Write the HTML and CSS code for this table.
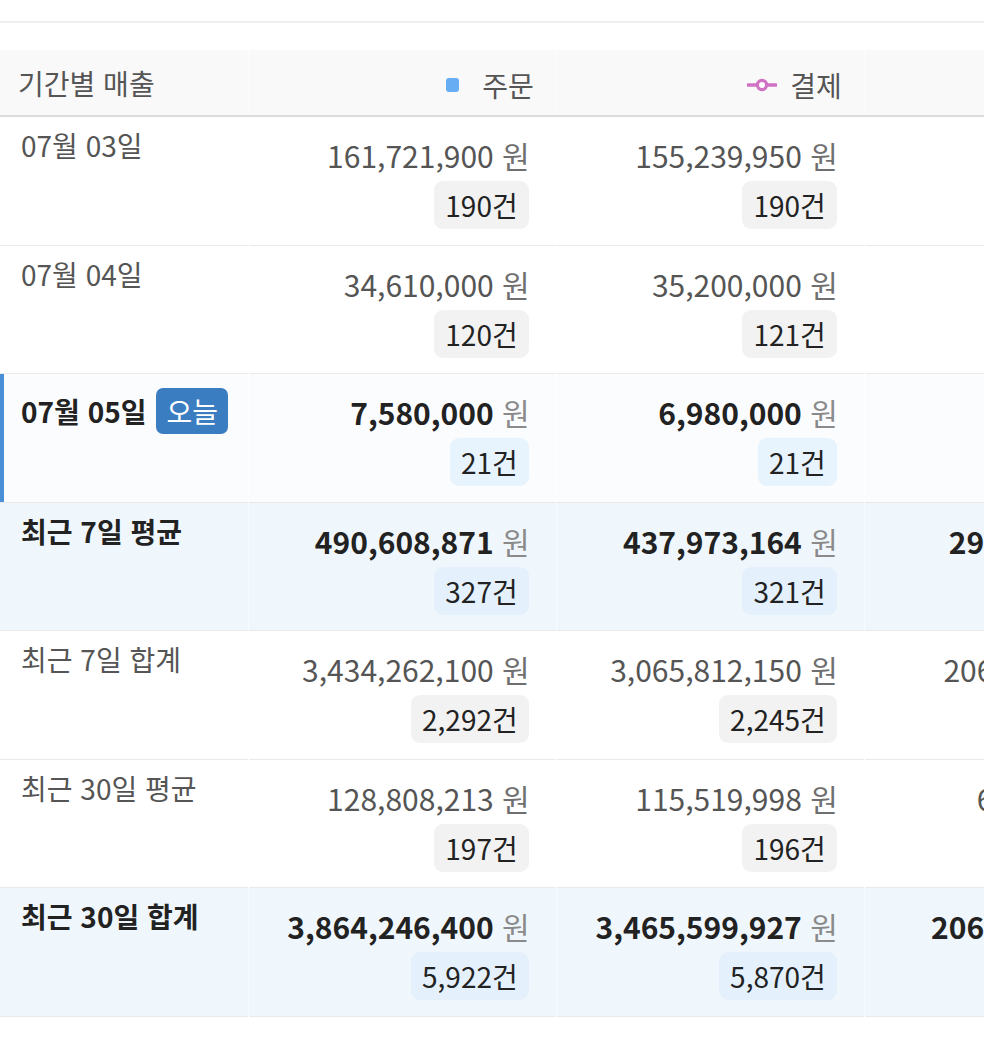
FILE: index.html
```html
<!DOCTYPE html>
<html lang="ko">
<head>
<meta charset="utf-8">
<title>기간별 매출</title>
<link rel="stylesheet" href="styles.css">
</head>
<body>
<div class="top-edge"></div>
<div class="table-wrap">
  <table class="sales">
    <colgroup>
      <col class="c-label"><col class="c-num"><col class="c-num"><col class="c-num">
    </colgroup>
    <thead>
      <tr>
        <th class="h-label">기간별 매출</th>
        <th class="h-num"><span class="legend"><span class="sq"></span>주문</span></th>
        <th class="h-num"><span class="legend legend-line"><svg class="ln" viewBox="0 0 30 14" width="30" height="14"><line x1="1" y1="7" x2="29" y2="7" stroke="#d173c4" stroke-width="3.4" stroke-linecap="round"/><circle cx="15" cy="7" r="4.6" fill="#fff" stroke="#d173c4" stroke-width="3.2"/></svg>결제</span></th>
        <th class="h-num"><span class="legend"><span class="sq sq-alt"></span>환불</span></th>
      </tr>
    </thead>
    <tbody>
      <tr class="row">
        <td class="label"><div class="label-line">07월 03일</div></td>
        <td class="num"><div class="cell"><div class="amount"><b>161,721,900</b> <span class="won">원</span></div><span class="count">190건</span></div></td>
        <td class="num"><div class="cell"><div class="amount"><b>155,239,950</b> <span class="won">원</span></div><span class="count">190건</span></div></td>
        <td class="num"><div class="cell"><div class="amount"><b>482,000</b> <span class="won">원</span></div><span class="count">2건</span></div></td>
      </tr>
      <tr class="row">
        <td class="label"><div class="label-line">07월 04일</div></td>
        <td class="num"><div class="cell"><div class="amount"><b>34,610,000</b> <span class="won">원</span></div><span class="count">120건</span></div></td>
        <td class="num"><div class="cell"><div class="amount"><b>35,200,000</b> <span class="won">원</span></div><span class="count">121건</span></div></td>
        <td class="num"><div class="cell"><div class="amount"><b>310,000</b> <span class="won">원</span></div><span class="count">1건</span></div></td>
      </tr>
      <tr class="row today">
        <td class="label"><div class="label-line">07월 05일 <span class="today-tag">오늘</span></div></td>
        <td class="num"><div class="cell"><div class="amount"><b>7,580,000</b> <span class="won">원</span></div><span class="count">21건</span></div></td>
        <td class="num"><div class="cell"><div class="amount"><b>6,980,000</b> <span class="won">원</span></div><span class="count">21건</span></div></td>
        <td class="num"><div class="cell"><div class="amount"><b>0</b> <span class="won">원</span></div><span class="count">0건</span></div></td>
      </tr>
      <tr class="row summary">
        <td class="label"><div class="label-line">최근 7일 평균</div></td>
        <td class="num"><div class="cell"><div class="amount"><b>490,608,871</b> <span class="won">원</span></div><span class="count">327건</span></div></td>
        <td class="num"><div class="cell"><div class="amount"><b>437,973,164</b> <span class="won">원</span></div><span class="count">321건</span></div></td>
        <td class="num"><div class="cell"><div class="amount"><b>29,441,371</b> <span class="won">원</span></div><span class="count">19건</span></div></td>
      </tr>
      <tr class="row">
        <td class="label"><div class="label-line">최근 7일 합계</div></td>
        <td class="num"><div class="cell"><div class="amount"><b>3,434,262,100</b> <span class="won">원</span></div><span class="count">2,292건</span></div></td>
        <td class="num"><div class="cell"><div class="amount"><b>3,065,812,150</b> <span class="won">원</span></div><span class="count">2,245건</span></div></td>
        <td class="num"><div class="cell"><div class="amount"><b>206,089,600</b> <span class="won">원</span></div><span class="count">133건</span></div></td>
      </tr>
      <tr class="row">
        <td class="label"><div class="label-line">최근 30일 평균</div></td>
        <td class="num"><div class="cell"><div class="amount"><b>128,808,213</b> <span class="won">원</span></div><span class="count">197건</span></div></td>
        <td class="num"><div class="cell"><div class="amount"><b>115,519,998</b> <span class="won">원</span></div><span class="count">196건</span></div></td>
        <td class="num"><div class="cell"><div class="amount"><b>6,869,653</b> <span class="won">원</span></div><span class="count">4건</span></div></td>
      </tr>
      <tr class="row summary">
        <td class="label"><div class="label-line">최근 30일 합계</div></td>
        <td class="num"><div class="cell"><div class="amount"><b>3,864,246,400</b> <span class="won">원</span></div><span class="count">5,922건</span></div></td>
        <td class="num"><div class="cell"><div class="amount"><b>3,465,599,927</b> <span class="won">원</span></div><span class="count">5,870건</span></div></td>
        <td class="num"><div class="cell"><div class="amount"><b>206,089,600</b> <span class="won">원</span></div><span class="count">133건</span></div></td>
      </tr>
    </tbody>
  </table>
</div>
</body>
</html>
```
FILE: styles.css
```css
html, body {
  margin: 0;
  padding: 0;
  background: #ffffff;
}
body {
  font-family: "Noto Sans CJK KR", "Noto Sans", sans-serif;
  font-size: 28px;
  color: #555555;
  overflow: hidden;
}
.top-edge {
  height: 21px;
  border-bottom: 2px solid #efefef;
  margin-bottom: 27px;
}
.table-wrap {
  width: 100%;
  overflow: hidden;
}
.sales {
  border-collapse: collapse;
  table-layout: fixed;
  width: 1173px;
}
.c-label { width: 248px; }
.c-num { width: 308px; }
.sales thead tr {
  background: #f9f9f9;
  border-bottom: 2px solid #dcdcdc;
}
.sales th {
  height: 65px;
  padding: 0;
  font-weight: 400;
  color: #555555;
  line-height: 1;
  vertical-align: middle;
  border-right: 1px solid rgba(255, 255, 255, 0.5);
}
.h-label {
  text-align: left;
  padding-left: 18px !important;
}
.h-num {
  text-align: right;
  padding-right: 22px !important;
}
.legend {
  display: inline-flex;
  align-items: center;
  gap: 23px;
}
.legend-line {
  gap: 13px;
}
.sq {
  display: inline-block;
  width: 13px;
  height: 14px;
  border-radius: 3px;
  background: #66adf3;
}
.sq-alt {
  background: #f2a35a;
}
.ln {
  display: block;
}
.row {
  border-bottom: 1px solid #e9e9e9;
}
.row td {
  vertical-align: top;
  padding: 0;
  border-right: 1px solid rgba(255, 255, 255, 0.5);
}
.label {
  padding: 14px 0 0 21px !important;
}
.label-line {
  display: flex;
  align-items: center;
  gap: 10px;
  min-height: 28px;
  line-height: 28px;
  white-space: nowrap;
}
.num {
  padding: 18px 28px 15.5px 0 !important;
}
.cell {
  display: flex;
  flex-direction: column;
  align-items: flex-end;
  gap: 6px;
}
.amount {
  font-size: 30px;
  line-height: 40px;
  height: 40px;
  white-space: nowrap;
  color: #555555;
  margin-right: -2px;
}
.amount b {
  font-weight: 400;
}
.won {
  color: #6f6f6f;
}
.count {
  display: block;
  height: 48px;
  line-height: 48px;
  padding: 0 11px;
  border-radius: 9px;
  background: #f2f2f2;
  color: #222222;
  white-space: nowrap;
  margin-right: -1px;
}
.today {
  background: #fbfcfe;
}
.today .label {
  box-shadow: inset 4px 0 0 #4a8fd6;
}
.today .label-line,
.today .amount b,
.summary .label-line,
.summary .amount b {
  font-weight: 700;
  color: #222222;
}
.today .won,
.summary .won {
  color: #8a8a8a;
}
.today .count {
  background: #e7f3fd;
}
.today-tag {
  display: inline-block;
  height: 46px;
  line-height: 46px;
  padding: 0 10px;
  border-radius: 7px;
  background: #3b7dc1;
  color: #ffffff;
  font-weight: 400;
}
.summary {
  background: #f0f7fc;
}
.summary .count {
  background: #e4f1fc;
}
```
